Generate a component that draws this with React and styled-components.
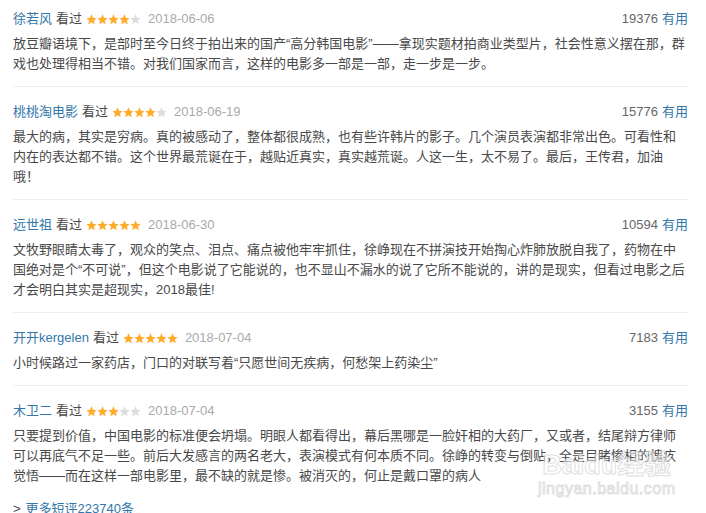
import React from "react";
import styled, { createGlobalStyle } from "styled-components";

const GlobalStyle = createGlobalStyle`
  html, body {
    margin: 0;
    padding: 0;
    background: #fff;
  }
  body {
    font-family: Arial, "Liberation Sans", "Noto Sans CJK SC", sans-serif;
    font-size: 13px;
    color: #494949;
  }
`;

const comments = [
  {
    name: "徐若风",
    stars: 4,
    date: "2018-06-06",
    votes: 19376,
    text:
      "放豆瓣语境下，是部时至今日终于拍出来的国产“高分韩国电影”——拿现实题材拍商业类型片，社会性意义摆在那，群戏也处理得相当不错。对我们国家而言，这样的电影多一部是一部，走一步是一步。",
  },
  {
    name: "桃桃淘电影",
    stars: 4,
    date: "2018-06-19",
    votes: 15776,
    text:
      "最大的病，其实是穷病。真的被感动了，整体都很成熟，也有些许韩片的影子。几个演员表演都非常出色。可看性和内在的表达都不错。这个世界最荒诞在于，越贴近真实，真实越荒诞。人这一生，太不易了。最后，王传君，加油哦！",
  },
  {
    name: "远世祖",
    stars: 5,
    date: "2018-06-30",
    votes: 10594,
    text:
      "文牧野眼睛太毒了，观众的笑点、泪点、痛点被他牢牢抓住，徐峥现在不拼演技开始掏心炸肺放脱自我了，药物在中国绝对是个“不可说”，但这个电影说了它能说的，也不显山不漏水的说了它所不能说的，讲的是现实，但看过电影之后才会明白其实是超现实，2018最佳!",
  },
  {
    name: "开开kergelen",
    stars: 5,
    date: "2018-07-04",
    votes: 7183,
    text: "小时候路过一家药店，门口的对联写着“只愿世间无疾病，何愁架上药染尘”",
  },
  {
    name: "木卫二",
    stars: 3,
    date: "2018-07-04",
    votes: 3155,
    text:
      "只要提到价值，中国电影的标准便会坍塌。明眼人都看得出，幕后黑哪是一脸奸相的大药厂，又或者，结尾辩方律师可以再底气不足一些。前后大发感言的两名老大，表演模式有何本质不同。徐峥的转变与倒贴，全是目睹惨相的愧疚觉悟——而在这样一部电影里，最不缺的就是惨。被消灭的，何止是戴口罩的病人",
  },
];

const Page = styled.div`
  position: relative;
  width: 675px;
  padding: 0 0 0 13px;
`;

const Item = styled.div`
  padding: 14px 0 12px;
  border-bottom: ${(p) => (p.last ? "none" : "1px solid #eee")};
  &:first-child {
    padding-top: 8px;
  }
`;

const Header = styled.div`
  display: flex;
  align-items: center;
  height: 22px;
  line-height: 22px;
`;

const Info = styled.div`
  display: flex;
  align-items: center;
  flex: 1;
`;

const Name = styled.a`
  color: #37a;
  text-decoration: none;
`;

const Seen = styled.span`
  color: #494949;
  margin-left: 4px;
`;

const Stars = styled.span`
  display: inline-flex;
  margin: 0 7px 0 4px;
`;

const Date = styled.span`
  color: #aaa;
`;

const Votes = styled.div`
  color: #666;
  display: flex;
  align-items: center;
  gap: 4px;
`;

const Useful = styled.a`
  color: #37a;
  text-decoration: none;
`;

const Body = styled.p`
  margin: 4px 0 0;
  padding-right: 3px;
  line-height: 20px;
  color: #494949;
  word-break: break-all;
`;

const More = styled.div`
  margin-top: 1px;
  line-height: 20px;
  color: #494949;
  display: flex;
  gap: 5px;
`;

const MoreLink = styled.a`
  color: #37a;
  text-decoration: none;
`;

const Watermark = styled.div`
  position: absolute;
  left: 538px;
  top: 450px;
  display: flex;
  flex-direction: column;
  align-items: center;
  color: rgba(255, 255, 255, 0.5);
  -webkit-text-stroke: 1px rgba(200, 200, 200, 0.6);
  font-family: "Liberation Sans", "Noto Sans CJK SC", sans-serif;
  pointer-events: none;
`;

const WmBig = styled.div`
  font-size: 27px;
  font-weight: bold;
  line-height: 30px;
`;

const WmSmall = styled.div`
  font-size: 16px;
  line-height: 18px;
  letter-spacing: 0.5px;
`;

const Star = ({ on }) => (
  <svg width="11" height="11" viewBox="0 0 24 24">
    <path
      d="M12 0.8l3.3 7.4 8 .8-6 5.4 1.8 7.9L12 18.2l-7.1 4.1 1.8-7.9-6-5.4 8-.8z"
      fill={on ? "#ffac2d" : "#ddd"}
    />
  </svg>
);

export default function App() {
  return (
    <>
      <GlobalStyle />
      <Page>
        {comments.map((c, i) => (
          <Item key={i} last={i === comments.length - 1}>
            <Header>
              <Info>
                <Name>{c.name}</Name>
                <Seen>看过</Seen>
                <Stars>
                  {[1, 2, 3, 4, 5].map((n) => (
                    <Star key={n} on={n <= c.stars} />
                  ))}
                </Stars>
                <Date>{c.date}</Date>
              </Info>
              <Votes>
                <span>{c.votes}</span>
                <Useful>有用</Useful>
              </Votes>
            </Header>
            <Body>{c.text}</Body>
          </Item>
        ))}
        <More>
          <span>&gt;</span>
          <MoreLink>更多短评223740条</MoreLink>
        </More>
        <Watermark>
          <WmBig>Baidu经验</WmBig>
          <WmSmall>jingyan.baidu.com</WmSmall>
        </Watermark>
      </Page>
    </>
  );
}
